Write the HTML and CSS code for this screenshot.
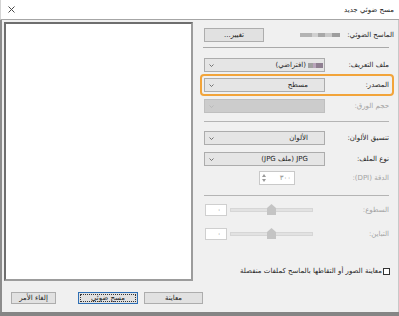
FILE: index.html
```html
<!DOCTYPE html>
<html lang="ar" dir="rtl">
<head>
    <meta charset="UTF-8">
    <meta name="viewport" content="width=device-width, initial-scale=1.0">
    <title>مسح ضوئي جديد</title>
    <link rel="stylesheet" href="styles.css">
</head>
<body>
    <div class="window">
        <div class="titlebar">
            <span class="title">مسح ضوئي جديد</span>
            <svg class="close" width="7" height="7" viewBox="0 0 7 7"><path d="M0.5 0.5L6.5 6.5M6.5 0.5L0.5 6.5" stroke="#4a4a4a" stroke-width="1"/></svg>
        </div>

        <div class="content">
            <div class="main">
                <!-- Settings column (right side in RTL) -->
                <div class="settings">
                    <div class="row scanner-row">
                        <span class="label">الماسح الضوئي:</span>
                        <div class="cell split">
                            <span class="blur-name"></span>
                            <button class="btn change-btn">تغيير...</button>
                        </div>
                    </div>

                    <div class="sep sep-top"></div>

                    <div class="row profile-row">
                        <span class="label">ملف التعريف:</span>
                        <div class="select profile-select">
                            <span class="profile-icon"></span>
                            <span class="value">(افتراضي)</span>
                            <svg class="chev" width="5" height="3" viewBox="0 0 5 3"><path d="M0.5 0.5L2.5 2.5L4.5 0.5" stroke="#555" stroke-width="0.8" fill="none"/></svg>
                        </div>
                    </div>

                    <div class="source-box">
                        <div class="row">
                            <span class="label">المصدر:</span>
                            <div class="select">
                                <span class="value">مسطح</span>
                                <svg class="chev" width="5" height="3" viewBox="0 0 5 3"><path d="M0.5 0.5L2.5 2.5L4.5 0.5" stroke="#555" stroke-width="0.8" fill="none"/></svg>
                            </div>
                        </div>
                    </div>

                    <div class="row paper-row">
                        <span class="label disabled">حجم الورق:</span>
                        <div class="select is-disabled">
                            <span class="value"></span>
                            <svg class="chev" width="5" height="3" viewBox="0 0 5 3"><path d="M0.5 0.5L2.5 2.5L4.5 0.5" stroke="#b4b4b4" stroke-width="0.8" fill="none"/></svg>
                        </div>
                    </div>

                    <div class="sep sep-mid"></div>

                    <div class="row color-row">
                        <span class="label">تنسيق الألوان:</span>
                        <div class="select">
                            <span class="value">الألوان</span>
                            <svg class="chev" width="5" height="3" viewBox="0 0 5 3"><path d="M0.5 0.5L2.5 2.5L4.5 0.5" stroke="#555" stroke-width="0.8" fill="none"/></svg>
                        </div>
                    </div>

                    <div class="row type-row">
                        <span class="label">نوع الملف:</span>
                        <div class="select">
                            <span class="value">JPG (ملف JPG)</span>
                            <svg class="chev" width="5" height="3" viewBox="0 0 5 3"><path d="M0.5 0.5L2.5 2.5L4.5 0.5" stroke="#555" stroke-width="0.8" fill="none"/></svg>
                        </div>
                    </div>

                    <div class="row dpi-row">
                        <span class="label disabled">الدقة (DPI):</span>
                        <div class="cell">
                            <div class="spin">
                                <span class="spin-value">٣٠٠</span>
                                <span class="spin-arrows">
                                    <svg width="4" height="3" viewBox="0 0 4 3"><path d="M0 3L2 0L4 3Z" fill="#9a9a9a"/></svg>
                                    <svg width="4" height="3" viewBox="0 0 4 3"><path d="M0 0L2 3L4 0Z" fill="#9a9a9a"/></svg>
                                </span>
                            </div>
                        </div>
                    </div>

                    <div class="sep sep-low"></div>

                    <div class="row slider-row bright-row">
                        <span class="label disabled">السطوع:</span>
                        <div class="cell split">
                            <div class="track">
                                <svg class="thumb" width="9" height="11" viewBox="0 0 9 11"><path d="M0 4L4.5 0L9 4L9 11L0 11Z" fill="#c4c4c4"/></svg>
                            </div>
                            <span class="num-box">٠</span>
                        </div>
                    </div>

                    <div class="row slider-row contrast-row">
                        <span class="label disabled">التباين:</span>
                        <div class="cell split">
                            <div class="track">
                                <svg class="thumb" width="9" height="11" viewBox="0 0 9 11"><path d="M0 4L4.5 0L9 4L9 11L0 11Z" fill="#c4c4c4"/></svg>
                            </div>
                            <span class="num-box">٠</span>
                        </div>
                    </div>

                    <label class="check-row">
                        <span class="checkbox"></span>
                        <span>معاينة الصور أو التقاطها بالماسح كملفات منفصلة</span>
                    </label>
                </div>

                <!-- Preview area (left side in RTL) -->
                <div class="preview"></div>
            </div>

            <div class="footer">
                <button class="btn foot-btn preview-btn">معاينة</button>
                <button class="btn foot-btn scan-btn">مسح ضوئي</button>
                <button class="btn foot-btn cancel-btn">إلغاء الأمر</button>
            </div>
        </div>
    </div>
</body>
</html>
```

FILE: styles.css
```css
/* Base */
body {
    margin: 0;
    background-color: #ffffff;
    font-family: "DejaVu Sans", sans-serif;
    font-size: 7px;
    color: #262626;
}
.window {
    width: 399px;
    height: 316px;
    display: flex;
    flex-direction: column;
    box-sizing: border-box;
    border-bottom: 4px solid #858585;
}

/* Title bar */
.titlebar {
    height: 19px;
    flex: none;
    display: flex;
    justify-content: space-between;
    align-items: center;
    padding: 0 5px 0 7px;
    background-color: #ffffff;
    border-bottom: 1px solid #a6a6a6;
    border-left: 1px solid #d4d4d4;
}
.title {
    font-size: 7px;
    color: #1a1a1a;
}
.close {
    display: block;
}

/* Dialog body */
.content {
    flex: 1;
    display: flex;
    flex-direction: column;
    background-color: #f0f0f0;
    border-left: 2px solid #8c8c8c;
    border-right: 1px solid #c8c8c8;
}
.main {
    height: 263px;
    display: flex;
}
.preview {
    width: 189px;
    height: 259px;
    box-sizing: border-box;
    margin: 2px 1px 0 2px;
    background-color: #ffffff;
    border: 2px solid;
    border-color: #6e6e6e #9c9c9c #9c9c9c #6e6e6e;
}

/* Settings column */
.settings {
    width: 204px;
    box-sizing: border-box;
    padding: 7px 9px 0 10px;
    display: flex;
    flex-direction: column;
}
.row {
    display: grid;
    grid-template-columns: 64px 121px;
    align-items: center;
    height: 14px;
}
.label {
    white-space: nowrap;
}
.label.disabled {
    color: #a3a3a3;
}
.cell {
    display: flex;
    align-items: center;
    height: 100%;
}
.cell.split {
    justify-content: space-between;
}

.scanner-row {
    height: 15px;
    margin-right: -5px;
    grid-template-columns: 69px 121px;
}
.blur-name {
    width: 40px;
    height: 4px;
    margin-right: -15px;
    background: linear-gradient(to left, #9e9e9e 0 20%, #c9c9c9 20% 38%, #a8a8a8 38% 55%, #d0d0d0 55% 70%, #b3b3b3 70% 100%);
    filter: blur(0.6px);
}

.sep {
    height: 1px;
    background-color: #a9a9a9;
}
.sep-top { margin-top: 5px; margin-left: -1px; }
.sep-mid { margin-top: 8px; background-color: #b4b4b4; }
.sep-low { margin-top: 10px; background-color: #b4b4b4; }

/* Combo boxes */
.select {
    height: 14px;
    box-sizing: border-box;
    display: flex;
    align-items: center;
    padding-right: 16px;
    background-color: #e5e5e5;
    border: 1px solid #acacac;
}
.select .value {
    flex: 1;
    white-space: nowrap;
}
.select .chev {
    margin-left: 4px;
}
.select.is-disabled {
    background-color: #cccccc;
    border-color: #bfbfbf;
}
.profile-select {
    padding-right: 1px;
}
.profile-icon {
    width: 15px;
    height: 5px;
    margin-left: 2px;
    background: linear-gradient(to left, #8f7f91 0 45%, #b9a5bb 45% 70%, #a1a1a1 70% 100%);
    filter: blur(0.5px);
}

.profile-row { margin-top: 10px; }
.source-box {
    margin: 2px -5px 0 -4px;
    padding: 2px 3px 2px 2px;
    border: 2px solid #f2a43a;
    border-radius: 4px;
}
.paper-row { margin-top: 3px; }
.color-row { margin-top: 9px; }
.type-row { margin-top: 7px; }
.dpi-row { margin-top: 5px; }

/* Spin box */
.spin {
    width: 36px;
    height: 14px;
    box-sizing: border-box;
    margin-right: 30px;
    display: flex;
    align-items: center;
    justify-content: space-between;
    background-color: #ffffff;
    border: 1px solid #c9c9c9;
    color: #8c8c8c;
}
.spin-value {
    padding-right: 3px;
}
.spin-arrows {
    display: flex;
    flex-direction: column;
    gap: 2px;
    padding-left: 2px;
}
.spin-arrows svg {
    display: block;
}

/* Sliders */
.slider-row { height: 12px; }
.bright-row { margin-top: 8px; }
.contrast-row { margin-top: 12px; }
.track {
    position: relative;
    width: 81px;
    height: 2px;
    margin-right: 12px;
    background-color: #e2e2e2;
    border: 1px solid #d6d6d6;
}
.thumb {
    position: absolute;
    left: 36px;
    top: -5px;
}
.num-box {
    width: 22px;
    height: 12px;
    box-sizing: border-box;
    margin-left: 1px;
    padding-right: 5px;
    display: flex;
    align-items: center;
    background-color: #ffffff;
    border: 1px solid #cfcfcf;
    color: #777;
}

/* Checkbox */
.check-row {
    display: flex;
    align-items: center;
    gap: 1px;
    margin-top: 27px;
    margin-right: -1px;
    white-space: nowrap;
}
.checkbox {
    width: 7px;
    height: 7px;
    box-sizing: border-box;
    background-color: #ffffff;
    border: 1px solid #333;
}

/* Buttons */
.btn {
    font-family: "DejaVu Sans", sans-serif;
    font-size: 7px;
    color: #1a1a1a;
    background-color: #e1e1e1;
    border: 1px solid #adadad;
    padding: 0;
    margin: 0;
}
.change-btn {
    width: 60px;
    height: 14px;
}
.footer {
    flex: 1;
    display: flex;
    justify-content: flex-end;
    align-items: flex-start;
    padding: 9px 0 0 9px;
}
.foot-btn {
    height: 12px;
    line-height: 10px;
}
.preview-btn { width: 59px; }
.scan-btn {
    width: 60px;
    margin-right: 6px;
    border-color: #2e6fb5;
    outline: 1px dotted #333;
    outline-offset: -3px;
}
.cancel-btn {
    width: 45px;
    margin-right: 22px;
}
```
